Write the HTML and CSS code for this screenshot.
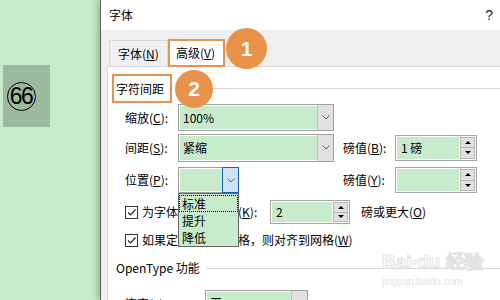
FILE: index.html
```html
<!DOCTYPE html>
<html lang="zh">
<head>
<meta charset="utf-8">
<link rel="stylesheet" href="styles.css">
</head>
<body>
<div class="page">
  <div class="side">
    <div class="badge"><span class="circled">66</span></div>
  </div>
  <div class="dialog">
    <div class="titlebar"><span>字体</span><span class="help">?</span></div>
    <div class="tabs">
      <div class="tab">字体(<u>N</u>)</div>
      <div class="tab active">高级(<u>V</u>)</div>
    </div>
    <div class="panel">
      <div class="section first">
        <span class="section-title boxed">字符间距</span><span class="rule"></span>
      </div>
      <div class="grid">
        <div class="label r1">缩放(<u>C</u>):</div>
        <div class="select r1 wide"><span class="val">100%</span><span class="btn"><svg width="8" height="5" viewBox="0 0 8 5"><path d="M0.5 0.5 L4 4 L7.5 0.5" fill="none" stroke="#606060" stroke-width="1"/></svg></span></div>
        <div class="r1 empty"></div>

        <div class="label r2">间距(<u>S</u>):</div>
        <div class="select r2 wide tall"><span class="val">紧缩</span><span class="btn"><svg width="8" height="5" viewBox="0 0 8 5"><path d="M0.5 0.5 L4 4 L7.5 0.5" fill="none" stroke="#606060" stroke-width="1"/></svg></span></div>
        <div class="gap r2"></div>
        <div class="label r2">磅值(<u>B</u>):</div>
        <div class="spin r2"><span class="val">1 磅</span><span class="arrows"><span class="arr"><svg width="6" height="3" viewBox="0 0 6 3"><path d="M0 3 L3 0 L6 3 Z" fill="#000"/></svg></span><span class="arr"><svg width="6" height="3" viewBox="0 0 6 3"><path d="M0 0 L3 3 L6 0 Z" fill="#000"/></svg></span></span></div>

        <div class="label r3">位置(<u>P</u>):</div>
        <div class="select r3 narrow"><span class="val"></span><span class="btn focus"><svg width="8" height="5" viewBox="0 0 8 5"><path d="M0.5 0.5 L4 4 L7.5 0.5" fill="none" stroke="#606060" stroke-width="1"/></svg></span></div>
        <div class="gap r3"></div>
        <div class="label r3">磅值(<u>Y</u>):</div>
        <div class="spin r3"><span class="val"></span><span class="arrows"><span class="arr"><svg width="6" height="3" viewBox="0 0 6 3"><path d="M0 3 L3 0 L6 3 Z" fill="#000"/></svg></span><span class="arr"><svg width="6" height="3" viewBox="0 0 6 3"><path d="M0 0 L3 3 L6 0 Z" fill="#000"/></svg></span></span></div>
      </div>

      <div class="check-row kern">
        <span class="checkbox"><svg width="11" height="11" viewBox="0 0 11 11"><path d="M2 5.5 L4.5 8 L9.5 2.5" fill="none" stroke="#222" stroke-width="1.2"/></svg></span>
        <span class="check-label">为字体调整字间距(<u>K</u>):</span>
        <div class="spin small"><span class="val">2</span><span class="arrows"><span class="arr"><svg width="6" height="3" viewBox="0 0 6 3"><path d="M0 3 L3 0 L6 3 Z" fill="#000"/></svg></span><span class="arr"><svg width="6" height="3" viewBox="0 0 6 3"><path d="M0 0 L3 3 L6 0 Z" fill="#000"/></svg></span></span></div>
        <span class="after">磅或更大(<u>O</u>)</span>
      </div>
      <div class="check-row grid-snap">
        <span class="checkbox"><svg width="11" height="11" viewBox="0 0 11 11"><path d="M2 5.5 L4.5 8 L9.5 2.5" fill="none" stroke="#222" stroke-width="1.2"/></svg></span>
        <span>如果定义了文档网格，则对齐到网格(<u>W</u>)</span>
      </div>

      <div class="section opentype">
        <span class="section-title">OpenType 功能</span><span class="rule"></span>
      </div>
      <div class="row liga">
        <span class="label wide-label">连字(<u>L</u>):</span>
        <div class="select liga-sel"><span class="val">无</span><span class="btn"><svg width="8" height="5" viewBox="0 0 8 5"><path d="M0.5 0.5 L4 4 L7.5 0.5" fill="none" stroke="#606060" stroke-width="1"/></svg></span></div>
      </div>
    </div>
  </div>

  <div class="marker m1">1</div>
  <div class="marker m2">2</div>

  <div class="dropdown">
    <div class="opt current">标准</div>
    <div class="opt">提升</div>
    <div class="opt">降低</div>
  </div>

  <div class="watermark">
    <div class="wm-big">Bai<span class="paw">●</span>du 经验</div>
    <div class="wm-small">jingyan.baidu.com</div>
  </div>
</div>
</body>
</html>
```
FILE: styles.css
```css
* { box-sizing: border-box; }
html, body { margin: 0; padding: 0; }
body {
  width: 500px;
  height: 300px;
  overflow: hidden;
  background: #c8ebcc;
  font-family: "Noto Sans CJK SC", "Noto Sans", sans-serif;
  font-size: 12px;
  line-height: 16px;
  color: #000;
}
u { text-decoration: underline; text-underline-offset: 1px; }

.page {
  position: relative;
  width: 500px;
  height: 300px;
  display: flex;
}

.side { width: 100px; flex: none; }
.badge {
  margin: 65px 0 0 3px;
  width: 47px;
  height: 62px;
  background: #9bba9f;
  display: flex;
  align-items: center;
  padding-left: 4px;
}
.circled {
  width: 29px;
  height: 29px;
  border: 1.5px solid #000;
  border-radius: 50%;
  display: flex;
  align-items: center;
  justify-content: center;
  font-family: "Liberation Sans", sans-serif;
  font-size: 23px;
  letter-spacing: -1.5px;
  padding-right: 1px;
}

.dialog {
  flex: 1;
  min-height: 0;
  overflow: hidden;
  background: #f0f0f0;
  border-left: 1px solid #606060;
  box-shadow: -3px 0 6px rgba(0, 0, 0, 0.22);
  display: flex;
  flex-direction: column;
}

.titlebar {
  flex: none;
  height: 30px;
  background: #fff;
  display: flex;
  align-items: center;
  justify-content: space-between;
  padding: 0 7px 0 8px;
}
.help { font-family: "Liberation Sans", sans-serif; font-size: 14px; color: #222; }

.tabs {
  flex: none;
  height: 36px;
  display: flex;
  align-items: flex-end;
  padding-left: 8px;
}
.tab {
  height: 26px;
  padding: 0 8px;
  display: flex;
  align-items: center;
  border: 1px solid #d9d9d9;
  border-bottom: none;
  width: 59px;
}
.tab.active {
  background: #fff;
  width: 57px;
  height: 28px;
  margin-bottom: -1px;
  border: 2px solid #e8924a;
  position: relative;
  z-index: 1;
  padding-left: 6px;
}

.panel {
  flex: 1;
  min-height: 0;
  margin-left: 6px;
  background: #fff;
  border-top: 1px solid #d9d9d9;
  border-left: 1px solid #d9d9d9;
}

.section {
  display: flex;
  align-items: center;
  padding-left: 4px;
}
.section.first { margin-top: 7px; height: 29px; }
.section-title { white-space: nowrap; }
.section-title.boxed {
  height: 29px;
  border: 2px solid #e8924a;
  padding: 0 6px 0 2px;
  display: flex;
  align-items: center;
}
.rule { flex: 1; height: 1px; background: #d9d9d9; margin-left: 4px; }
.section.opentype { height: 30px; padding-left: 8px; }
.section.opentype .rule { margin-left: 6px; }

.grid {
  display: grid;
  grid-template-columns: 53px 156px 9px 52px 82px;
  grid-template-rows: 29px 31px 34px;
  align-items: center;
  padding-left: 17px;
}
.label { white-space: nowrap; }
.r1.empty { grid-column: 3 / 6; }

.select {
  display: flex;
  height: 27px;
  border: 1px solid #a0a0a0;
  box-shadow: inset 0 0 0 1px #fff;
  background: #c8ebcc;
}
.select.tall { height: 28px; }
.select.narrow { width: 61px; height: 26px; }
.select .val {
  flex: 1;
  display: flex;
  align-items: center;
  padding-left: 3px;
  margin: 1px 0 1px 1px;
}
.select .btn {
  width: 16px;
  background: #e1e1e1;
  border-left: 1px solid #c4c4c4;
  display: flex;
  align-items: center;
  justify-content: center;
}
.select .btn.focus {
  background: #cce4f7;
  border: 1px solid #1c5ea8;
  margin: -1px -1px -1px 0;
  width: 17px;
}

.spin {
  display: flex;
  height: 26px;
  border: 1px solid #a6a6a6;
  background: #fff;
  padding: 1px;
}
.spin .val {
  flex: 1;
  background: #c8ebcc;
  display: flex;
  align-items: center;
  padding-left: 4px;
}
.spin .arrows {
  width: 15px;
  display: flex;
  flex-direction: column;
  margin-left: 1px;
}
.spin .arr {
  flex: 1;
  background: #e1e1e1;
  border: 1px solid #b5b5b5;
  display: flex;
  align-items: center;
  justify-content: center;
}
.spin .arr + .arr { border-top: none; }
.spin.small { width: 80px; height: 24px; }

.check-row {
  display: flex;
  align-items: center;
  padding-left: 17px;
  white-space: nowrap;
}
.check-row.kern { height: 30px; }
.check-row.grid-snap { height: 26px; }
.checkbox {
  width: 13px;
  height: 13px;
  border: 1px solid #333;
  background: #fff;
  margin-right: 4px;
  display: flex;
  align-items: center;
  justify-content: center;
}
.check-label { width: 128px; }
.after { margin-left: 11px; }

.row.liga {
  display: flex;
  align-items: flex-start;
  padding: 7px 0 0 17px;
}
.wide-label { width: 80px; padding-top: 6px; }
.select.liga-sel { width: 103px; height: 26px; }

.marker {
  position: absolute;
  border-radius: 50%;
  background: #e8924a;
  color: #fff;
  font-family: "Liberation Sans", sans-serif;
  font-weight: bold;
  font-size: 21px;
  display: flex;
  align-items: center;
  justify-content: center;
}
.m1 { left: 226px; top: 28px; width: 41px; height: 41px; }
.m2 { left: 175px; top: 70px; width: 38px; height: 38px; }

.dropdown {
  position: absolute;
  left: 178px;
  top: 193px;
  width: 61px;
  height: 54px;
  background: #c8ebcc;
  border: 1px solid #646464;
  padding: 1px 0 0 0;
}
.opt {
  height: 17px;
  line-height: 15px;
  padding-left: 2px;
  border: 1px solid transparent;
}
.opt.current { border: 1px dotted #000; }

.watermark {
  position: absolute;
  left: 382px;
  top: 248px;
  color: rgba(255, 255, 255, 0);
  pointer-events: none;
}
.wm-big {
  font-family: "Liberation Sans", sans-serif;
  font-size: 19px;
  font-weight: bold;
  line-height: 28px;
  -webkit-text-stroke: 1px #e2e2e2;
  white-space: nowrap;
}
.paw { font-size: 9px; vertical-align: top; }
.wm-small {
  font-family: "Liberation Sans", sans-serif;
  font-size: 10px;
  line-height: 12px;
  color: #e4e4e4;
}
```
